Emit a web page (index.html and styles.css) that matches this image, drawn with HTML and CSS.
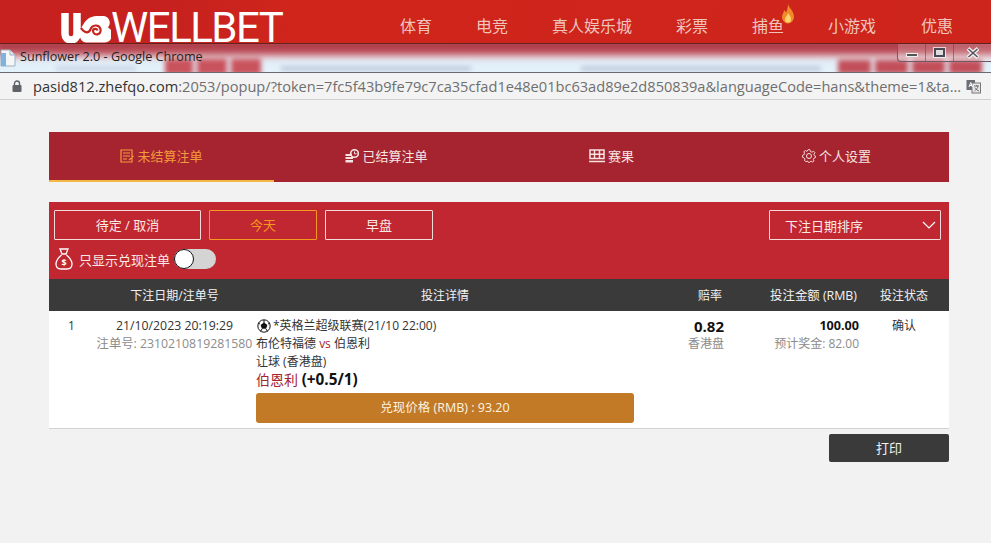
FILE: index.html
```html
<!DOCTYPE html>
<html lang="zh-CN">
<head>
<meta charset="utf-8">
<title>Sunflower 2.0</title>
<link rel="stylesheet" href="styles.css">
</head>
<body>
<header class="site">
  <a class="logo">
    <svg class="logo-mark" viewBox="0 0 50 30" width="50" height="30" aria-hidden="true">
      <path d="M4 0V21a6 6 0 0 0 6 6a6 6 0 0 0 6-6V0" fill="none" stroke="#fff" stroke-width="7.5"/>
      <path d="M19 18C23 8 28 3 36 3H43A7 7 0 0 1 47 14.500A8 8 0 0 1 43 29.500H25A7 7 0 0 1 19 24Z" fill="#fff"/>
      <path d="M20 15C24 21 28 20 29.500 16.500C31 11.500 38 11 39.500 16C41 22 32.500 23.500 32 18C32 15.500 36 15 36.500 17.500" fill="none" stroke="#c8231c" stroke-width="2.200"/>
    </svg>
    <span class="logo-text">WELLBET</span>
  </a>
  <nav class="site-nav">
    <a>体育</a><a>电竞</a><a>真人娱乐城</a><a>彩票</a>
    <a class="hot">捕鱼
      <svg class="flame" viewBox="0 0 14 20" width="14" height="20" aria-hidden="true">
        <path d="M7 0C8 4 13 7 13 13A6 6.500 0 0 1 1 13C1 10 3 9 3 6C4 7 5 8 5 9C6 6 7 3 7 0Z" fill="#f08a2a"/>
        <path d="M7 9C8 11 10 12 10 15A3 3.500 0 0 1 4 15C4 13 6 12 7 9Z" fill="#fbd36a"/>
      </svg>
    </a>
    <a>小游戏</a><a class="last">优惠</a>
  </nav>
</header>

<div class="titlebar">
  <div class="titlebar-blur"></div>
  <svg class="page-icon" viewBox="0 0 16 18" width="16" height="18" aria-hidden="true">
    <path d="M1 1H10L15 6V17H1Z" fill="#f4f6f8" stroke="#9fb0c0"/>
    <path d="M1 4H6V17H1Z" fill="#7fb2dc"/>
    <path d="M10 1V6H15" fill="#dfe6ee" stroke="#9fb0c0"/>
  </svg>
  <span class="window-title">Sunflower 2.0 - Google Chrome</span>
  <div class="win-controls">
    <span class="win-btn"><i class="win-min"></i></span>
    <span class="win-btn"><i class="win-max"></i></span>
    <span class="win-btn win-close">
      <svg viewBox="0 0 14 12" width="14" height="12" aria-hidden="true"><path d="M2 1.500L12 10.500M12 1.500L2 10.500" stroke="#f4f4f4" stroke-width="4"/><path d="M2.500 2L11.500 10M11.500 2L2.500 10" stroke="#55555f" stroke-width="1.600"/></svg>
    </span>
  </div>
</div>

<div class="urlbar">
  <svg class="lock" viewBox="0 0 10 12" width="10" height="12" aria-hidden="true">
    <path d="M2.500 5V3.500a2.500 2.500 0 0 1 5 0V5" fill="none" stroke="#5f6368" stroke-width="1.400"/>
    <rect x="0.500" y="5" width="9" height="7" rx="1" fill="#5f6368"/>
  </svg>
  <span class="url"><b>pasid812.zhefqo.com</b>:2053/popup/?token=7fc5f43b9fe79c7ca35cfad1e48e01bc63ad89e2d850839a&amp;languageCode=hans&amp;theme=1&amp;ta...</span>
  <svg class="translate" viewBox="0 0 15 15" width="15" height="15" aria-hidden="true">
    <rect x="0.500" y="1" width="8.500" height="10" fill="#6b6f75"/>
    <rect x="6" y="4" width="8.500" height="10" fill="#e8e8e8" stroke="#777"/>
    <path d="M3 8L4.800 3.500L6.500 8M3.600 6.500H6" fill="none" stroke="#fff"/>
    <path d="M8 7H13M10.500 6V7M12 7C11.500 9.500 10 11 8.500 12M9 8.500C10 10.500 11.500 11.500 13 12" fill="none" stroke="#555" stroke-width=".8"/>
  </svg>
</div>

<main class="content">
  <nav class="tabs">
    <a class="tab active">
      <svg class="tab-icon" viewBox="0 0 14 14" width="14" height="14" aria-hidden="true"><path d="M1 1H12V13H1ZM3 4H10M3 7H10M3 10H7M13.500 7L9 11" fill="none" stroke="currentColor" stroke-width="1.200"/></svg>
      未结算注单
    </a>
    <a class="tab">
      <svg class="tab-icon" viewBox="0 0 14 14" width="14" height="14" aria-hidden="true"><path d="M0.500 5H7V7H0.500ZM0.500 8H8V10H0.500ZM0.500 11H8V13.500H0.500Z" fill="currentColor"/><circle cx="9.500" cy="4.500" r="3.800" fill="none" stroke="currentColor" stroke-width="1.600"/><path d="M9.500 2.500V4.800H11.500" fill="none" stroke="currentColor"/></svg>
      已结算注单
    </a>
    <a class="tab">
      <svg class="tab-icon wide" viewBox="0 0 16 14" width="16" height="14" aria-hidden="true"><path d="M1 1H15V9.500H1ZM0 12.500H16M5.500 1V9.500M10.500 1V9.500M1 5.200H15" fill="none" stroke="currentColor" stroke-width="1.500"/></svg>
      赛果
    </a>
    <a class="tab">
      <svg class="tab-icon" viewBox="0 0 14 14" width="14" height="14" aria-hidden="true"><circle cx="7" cy="7" r="2.500" fill="none" stroke="currentColor"/><path d="M6 .700H8L8.400 2.500L10 3.200L11.600 2.200L13 3.800L11.800 5.200L12.300 6.500L13.500 7V8.500L12 9L11.400 10.500L12 12L10.500 13L9 12L7.800 13.300H6.200L5.500 12L4 12.700L2.500 11.500L3 10L2 8.800L.500 8.300V6.300L2.200 5.500L2.500 4L1.800 2.700L3.500 1.500L5 2.500Z" fill="none" stroke="currentColor" stroke-width=".9"/></svg>
      个人设置
    </a>
  </nav>

  <section class="filters">
    <div class="filter-row">
      <button class="fbtn fbtn-pending">待定 / 取消</button>
      <button class="fbtn fbtn-day active">今天</button>
      <button class="fbtn fbtn-day">早盘</button>
      <div class="sort">下注日期排序
        <svg viewBox="0 0 14 8" width="14" height="8" aria-hidden="true"><path d="M1 1L7 7L13 1" fill="none" stroke="#fff" stroke-width="1.200"/></svg>
      </div>
    </div>
    <div class="cash-row">
      <svg class="bag" viewBox="0 0 18 22" width="18" height="22" aria-hidden="true">
        <path d="M5 1H13L11 6H7ZM7 6H11M6.500 7C3 10 1 13 1 16C1 19.500 3.500 21 6 21H12C14.500 21 17 19.500 17 16C17 13 15 10 11.500 7" fill="none" stroke="#fff" stroke-width="1.300"/>
        <text x="9" y="18" class="bag-sign">$</text>
      </svg>
      <span class="cash-label">只显示兑现注单</span>
      <span class="switch"><i class="knob"></i></span>
    </div>
  </section>

  <div class="grid table-head">
    <span></span>
    <span class="center">下注日期/注单号</span>
    <span class="center">投注详情</span>
    <span class="right r2">赔率</span>
    <span class="right r2 stake-head">投注金额 (RMB)</span>
    <span class="center">投注状态</span>
  </div>

  <div class="grid table-row">
    <div class="center idx">1</div>
    <div class="center bet-id">
      <div>21/10/2023 20:19:29</div>
      <div class="muted nowrap">注单号: 2310210819281580</div>
    </div>
    <div class="detail">
      <div class="league">
        <svg class="ball" viewBox="0 0 14 14" width="14" height="14" aria-hidden="true"><circle cx="7" cy="7" r="6.200" fill="#fff" stroke="#111"/><path d="M7 3.600L10.400 6L9.100 9.800H4.900L3.600 6Z" fill="#111"/><path d="M7 1V4M11 5L13 4M3 5L1 4M9 10L10.500 12.500M5 10L3.500 12.500" stroke="#111"/></svg>*英格兰超级联赛(21/10 22:00)
      </div>
      <div>布伦特福德 <span class="vs">vs</span> 伯恩利</div>
      <div>让球 (香港盘)</div>
      <div class="pick"><span class="pick-team">伯恩利</span> <b>(+0.5/1)</b></div>
      <button class="cashout">兑现价格 (RMB) : 93.20</button>
    </div>
    <div class="right">
      <div class="odds">0.82</div>
      <div class="muted">香港盘</div>
    </div>
    <div class="right">
      <div class="stake">100.00</div>
      <div class="muted">预计奖金: 82.00</div>
    </div>
    <div class="center">确认</div>
  </div>

  <div class="actions"><button class="print">打印</button></div>
</main>
</body>
</html>
```

FILE: styles.css
```css
* { box-sizing: border-box; }
html, body { margin: 0; height: 100%; }
body {
  width: 991px;
  height: 543px;
  overflow: hidden;
  background: #f2f2f2;
  font-family: "Open Sans", "Noto Sans CJK SC", sans-serif;
  font-size: 12px;
  color: #333;
}

/* site behind the popup */
.site {
  height: 44px;
  display: flex;
  align-items: flex-start;
  justify-content: space-between;
  padding: 0 38px 0 61px;
  background: linear-gradient(100deg, #c6211f 0, #c6211f 16%, #cf251b 30%, #cd241c 100%);
  border-bottom: 1px solid #64201c;
}
.logo { display: flex; align-items: flex-start; padding-top: 13px; color: #fff; }
.logo-text {
  font-family: Roboto, "Liberation Sans", sans-serif;
  font-size: 42px;
  line-height: 30px;
  letter-spacing: -1.500px;
}
.site-nav { display: flex; gap: 44px; padding-top: 15px; font-size: 16px; line-height: 22px; color: #f0c4bc; }
.site-nav a { display: block; position: relative; white-space: nowrap; }
.site-nav .last { margin-left: 1px; }
.flame { position: absolute; left: 29px; top: -11px; }

/* blurred popup title bar */
.titlebar {
  position: relative;
  height: 28px;
  display: flex;
  align-items: center;
  overflow: hidden;
  background: #dcecf7;
}
.titlebar-blur {
  position: absolute;
  inset: -4px;
  filter: blur(2.500px);
  background:
    linear-gradient(#c9535d, #c9535d) 169px 19px / 28px 16px no-repeat,
    linear-gradient(#c9535d, #c9535d) 201px 19px / 30px 16px no-repeat,
    linear-gradient(#c9535d, #c9535d) 235px 19px / 30px 16px no-repeat,
    linear-gradient(#c24f5a, #c24f5a) 842px 20px / 33px 14px no-repeat,
    linear-gradient(#c24f5a, #c24f5a) 879px 20px / 33px 14px no-repeat,
    linear-gradient(#c24f5a, #c24f5a) 916px 20px / 33px 14px no-repeat,
    linear-gradient(#c24f5a, #c24f5a) 953px 20px / 33px 14px no-repeat,
    linear-gradient(#bcc8da, #bcc8da) 60px 27px / 80px 3px no-repeat,
    linear-gradient(#aab5ca, #aab5ca) 285px 27px / 190px 3px no-repeat,
    linear-gradient(#aab5ca, #aab5ca) 585px 27px / 240px 3px no-repeat,
    linear-gradient(#a83a46 0, #b4434e 26%, #c8707a 38%, #e4c8ce 48%, #e0eff9 60%, #e6f3fc 100%);
}
.page-icon { position: relative; margin: 0 4px 0 0; flex: none; }
.window-title { position: relative; top: -1px; font-size: 12.600px; line-height: 18px; color: #222; white-space: nowrap; }
.win-controls {
  position: absolute;
  top: 0;
  right: 0;
  width: 94px;
  height: 18px;
  display: flex;
  border: 1px solid #6d5a66;
  border-width: 0 0 1px 1px;
  border-radius: 0 0 0 4px;
  background: rgba(255, 255, 255, .18);
}
.win-btn { width: 28px; display: flex; align-items: center; justify-content: center; border-right: 1px solid rgba(90, 70, 85, .55); }
.win-close { flex: 1; border-right: 0; }
.win-min { display: block; width: 12px; height: 4px; margin-top: 5px; background: #555; border: 1px solid #eee; }
.win-max { display: block; width: 11px; height: 9px; border: 2px solid #4a4a55; background: #ddd; outline: 1px solid rgba(255,255,255,.7); }

/* address bar */
.urlbar {
  height: 28px;
  display: flex;
  align-items: center;
  padding-left: 12px;
  background: #f3f3f3;
  border-top: 1px solid #6a6a70;
  border-bottom: 1px solid #cfcfcf;
}
.lock { flex: none; }
.url {
  margin-left: 11px;
  width: 929px;
  font-size: 14.600px;
  line-height: 26px;
  color: #6f6f6f;
  white-space: nowrap;
  overflow: hidden;
}
.url b { font-weight: 400; color: #333; }
.translate { flex: none; margin-left: 4px; }

/* content */
.content { width: 900px; margin: 32px 0 0 49px; }
.tabs {
  height: 50px;
  display: grid;
  grid-template-columns: repeat(4, 1fr);
  background: #a52430;
}
.tab {
  display: flex;
  align-items: center;
  justify-content: center;
  gap: 3px;
  height: 50px;
  padding-bottom: 1px;
  font-size: 13px;
  color: #f6e4e2;
  border-bottom: 2px solid transparent;
}
.tab.active { color: #f39a3c; border-bottom-color: #f4b945; }
.tab-icon { flex: none; }

.filters { height: 77px; margin-top: 20px; padding: 8px 8px 0 5px; background: #c12730; }
.filter-row { display: flex; gap: 8px; }
.fbtn {
  height: 30px;
  padding: 0 0 2px;
  background: transparent;
  border: 1px solid #f4dcdc;
  border-radius: 1px;
  font: inherit;
  font-size: 13px;
  color: #f8e8e6;
}
.fbtn-pending { width: 147px; }
.fbtn-day { width: 108px; }
.fbtn.active { border-color: #f59a1e; color: #f59a1e; }
.sort {
  width: 172px;
  height: 30px;
  margin-left: auto;
  display: flex;
  align-items: center;
  justify-content: space-between;
  padding: 0 4px 0 15px;
  border: 1px solid #f4dcdc;
  border-radius: 1px;
  font-size: 13px;
  color: #f8e8e6;
}
.cash-row { display: flex; align-items: center; margin-top: 7px; height: 24px; }
.bag { flex: none; margin-left: 1px; }
.bag-sign { font: 700 9px "Open Sans", sans-serif; fill: #fff; text-anchor: middle; }
.cash-label { margin-left: 6px; font-size: 13px; color: #f8e8e6; }
.switch {
  position: relative;
  width: 42px;
  height: 20px;
  margin-left: 4px;
  border-radius: 10px;
  background: #d4d4d4;
}
.knob {
  position: absolute;
  left: 0;
  top: 0;
  width: 20px;
  height: 20px;
  border-radius: 50%;
  background: #fff;
  border: 1px solid #111;
}

.grid { display: grid; grid-template-columns: 44px 163px 378px 90px 135px 90px; }
.center { text-align: center; }
.right { text-align: right; }
.r2 { padding-right: 2px; }
.table-head { height: 32px; align-items: center; background: #3a3a3a; color: #f2f2f2; font-size: 12px; }
.stake-head { font-size: 12.400px; }
.table-row {
  padding: 6px 0 5px;
  background: #fff;
  border-bottom: 1px solid #cfd3d3;
  line-height: 18px;
  color: #333;
}
.idx { padding-left: 1px; }
.bet-id { display: flex; flex-direction: column; align-items: center; font-size: 12.300px; }
.nowrap { white-space: nowrap; }
.muted { color: #8c8c8c; }
.league { display: flex; align-items: center; gap: 2px; padding-left: 1px; }
.ball { flex: none; }
.vs { color: #a52430; font-size: 12px; }
.pick { height: 17px; font-size: 14px; line-height: 17px; white-space: nowrap; }
.pick-team { color: #a52430; }
.pick b { color: #111; font-size: 15.300px; }
.cashout {
  display: block;
  width: 378px;
  height: 30px;
  margin-top: 5px;
  padding: 0;
  border: 0;
  border-radius: 3px;
  background: #c27a27;
  font: inherit;
  font-size: 12.500px;
  color: #fdf3e0;
}
.odds { font-size: 15px; font-weight: 700; color: #111; }
.stake { font-size: 12.600px; font-weight: 700; color: #111; }
.actions { display: flex; justify-content: flex-end; margin-top: 5px; }
.print {
  width: 120px;
  height: 28px;
  padding: 0 0 2px;
  border: 0;
  border-radius: 2px;
  background: #3a3a3a;
  font: inherit;
  font-size: 13px;
  color: #f2f2f2;
}
```
